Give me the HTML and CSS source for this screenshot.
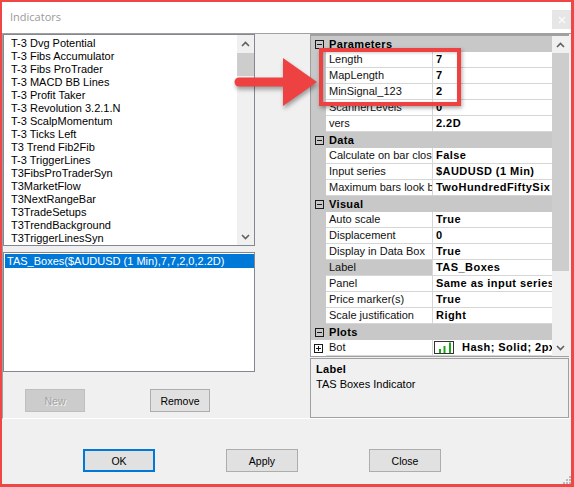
FILE: index.html
```html
<!DOCTYPE html>
<html>
<head>
<meta charset="utf-8">
<link rel="stylesheet" href="styles.css">
</head>
<body>
<div class="window">
  <div class="titlebar">
    <span class="title">Indicators</span>
    <span class="close"><svg width="8" height="8" viewBox="0 0 8 8"><path d="M1 1L7 7M7 1L1 7" stroke="#fbfbfb" stroke-width="1.4"/></svg></span>
  </div>
  <div class="main">
    <div class="leftcol">
      <div class="listbox">
        <ul class="items">
          <li>T-3 Dvg Potential</li>
          <li>T-3 Fibs Accumulator</li>
          <li>T-3 Fibs ProTrader</li>
          <li>T-3 MACD BB Lines</li>
          <li>T-3 Profit Taker</li>
          <li>T-3 Revolution 3.2.1.N</li>
          <li>T-3 ScalpMomentum</li>
          <li>T-3 Ticks Left</li>
          <li>T3 Trend Fib2Fib</li>
          <li>T-3 TriggerLines</li>
          <li>T3FibsProTraderSyn</li>
          <li>T3MarketFlow</li>
          <li>T3NextRangeBar</li>
          <li>T3TradeSetups</li>
          <li>T3TrendBackground</li>
          <li>T3TriggerLinesSyn</li>
        </ul>
        <div class="vscroll">
          <div class="sbtn"><svg width="9" height="6" viewBox="0 0 9 6"><path d="M1 5L4.5 1.5L8 5" fill="none" stroke="#606060" stroke-width="1.6"/></svg></div>
          <div class="track"><div class="thumb list-thumb"></div></div>
          <div class="sbtn"><svg width="9" height="6" viewBox="0 0 9 6"><path d="M1 1L4.5 4.5L8 1" fill="none" stroke="#606060" stroke-width="1.6"/></svg></div>
        </div>
      </div>
      <div class="applied">
        <div class="sel">TAS_Boxes($AUDUSD (1 Min),7,7,2,0,2.2D)</div>
      </div>
      <div class="leftbtns">
        <div class="btn disabled">New</div>
        <div class="btn">Remove</div>
      </div>
    </div>
    <div class="rightcol">
      <div class="grid">
        <div class="rows">
          <div class="cat"><span class="tog"></span>Parameters</div>
          <div class="row"><span class="gut"></span><span class="nm">Length</span><span class="val">7</span></div>
          <div class="row"><span class="gut"></span><span class="nm">MapLength</span><span class="val">7</span></div>
          <div class="row"><span class="gut"></span><span class="nm">MinSignal_123</span><span class="val">2</span></div>
          <div class="row"><span class="gut"></span><span class="nm">ScannerLevels</span><span class="val">0</span></div>
          <div class="row"><span class="gut"></span><span class="nm">vers</span><span class="val">2.2D</span></div>
          <div class="cat"><span class="tog"></span>Data</div>
          <div class="row"><span class="gut"></span><span class="nm">Calculate on bar close</span><span class="val">False</span></div>
          <div class="row"><span class="gut"></span><span class="nm">Input series</span><span class="val">$AUDUSD (1 Min)</span></div>
          <div class="row"><span class="gut"></span><span class="nm">Maximum bars look back</span><span class="val">TwoHundredFiftySix</span></div>
          <div class="cat"><span class="tog"></span>Visual</div>
          <div class="row"><span class="gut"></span><span class="nm">Auto scale</span><span class="val">True</span></div>
          <div class="row"><span class="gut"></span><span class="nm">Displacement</span><span class="val">0</span></div>
          <div class="row"><span class="gut"></span><span class="nm">Display in Data Box</span><span class="val">True</span></div>
          <div class="row"><span class="gut"></span><span class="nm selected">Label</span><span class="val">TAS_Boxes</span></div>
          <div class="row"><span class="gut"></span><span class="nm">Panel</span><span class="val">Same as input series</span></div>
          <div class="row"><span class="gut"></span><span class="nm">Price marker(s)</span><span class="val">True</span></div>
          <div class="row"><span class="gut"></span><span class="nm">Scale justification</span><span class="val">Right</span></div>
          <div class="cat"><span class="tog"></span>Plots</div>
          <div class="row"><span class="gut white"><span class="tog plus"></span></span><span class="nm">Bot</span><span class="val plot"><svg class="ploticon" width="20" height="13" viewBox="0 0 20 13"><rect x="0.5" y="0.5" width="19" height="12" fill="#fff" stroke="#333"/><rect x="5" y="8" width="2" height="4" fill="#19a619"/><rect x="9.5" y="5" width="2" height="7" fill="#19a619"/><rect x="15" y="1.5" width="2" height="10.5" fill="#19a619"/></svg>Hash; Solid; 2px</span></div>
        </div>
        <div class="vscroll">
          <div class="sbtn"><svg width="9" height="6" viewBox="0 0 9 6"><path d="M1 5L4.5 1.5L8 5" fill="none" stroke="#606060" stroke-width="1.6"/></svg></div>
          <div class="track"><div class="thumb grid-thumb"></div></div>
          <div class="sbtn"><svg width="9" height="6" viewBox="0 0 9 6"><path d="M1 1L4.5 4.5L8 1" fill="none" stroke="#606060" stroke-width="1.6"/></svg></div>
        </div>
      </div>
      <div class="desc">
        <div class="desc-title">Label</div>
        <div>TAS Boxes Indicator</div>
      </div>
    </div>
  </div>
  <div class="footer">
    <div class="btn wide default">OK</div>
    <div class="btn wide">Apply</div>
    <div class="btn wide">Close</div>
    <svg class="grip" width="8" height="8" viewBox="0 0 8 8"><rect x="6" y="0" width="2" height="2" fill="#b9b9b9"/><rect x="3" y="3" width="2" height="2" fill="#b9b9b9"/><rect x="6" y="3" width="2" height="2" fill="#b9b9b9"/><rect x="0" y="6" width="2" height="2" fill="#b9b9b9"/><rect x="3" y="6" width="2" height="2" fill="#b9b9b9"/><rect x="6" y="6" width="2" height="2" fill="#b9b9b9"/></svg>
  </div>
  <div class="callout-box"></div>
  <svg class="callout-arrow" width="96" height="58" viewBox="0 0 96 58">
    <line x1="11" y1="30" x2="60" y2="30" stroke="#ee4242" stroke-width="9" stroke-linecap="round"/>
    <polygon points="55,6 89,30 55,54" fill="#ee4242"/>
  </svg>
</div>
</body>
</html>
```

FILE: styles.css
```css
* { box-sizing: border-box; }
html, body { margin: 0; padding: 0; }
body {
  width: 574px;
  height: 487px;
  overflow: hidden;
  font-family: "Liberation Sans", Arial, sans-serif;
  font-size: 11px;
  color: #000;
  background: #fff;
}
.window {
  position: relative;
  width: 574px;
  height: 487px;
  border-style: solid;
  border-color: #ef4646;
  border-width: 2px 3px 3px 2px;
  background: #f0f0f0;
  display: flex;
  flex-direction: column;
}
.titlebar {
  height: 31px;
  flex: none;
  background: #fff;
  display: flex;
  align-items: flex-start;
}
.title {
  font-family: "Open Sans", "Noto Sans", sans-serif;
  font-size: 11px;
  line-height: 15px;
  color: #9a9a9a;
  margin: 7px 0 0 8px;
}
.close {
  margin-left: auto;
  margin-top: 8px;
  width: 19px;
  height: 19px;
  background: #e6e6e6;
  display: flex;
  align-items: center;
  justify-content: center;
}
.main {
  height: 386px;
  flex: none;
  display: flex;
  border-top: 1px solid #a0a0a0;
  border-left: 1px solid #a0a0a0;
  border-bottom: 1px solid #fff;
  padding-right: 2px;
}
.leftcol {
  width: 252px;
  flex: none;
  display: flex;
  flex-direction: column;
}
.listbox {
  height: 212px;
  flex: none;
  border: 1px solid #828790;
  background: #fff;
  display: flex;
}
.items {
  list-style: none;
  margin: 0;
  padding: 2px 0 0 7px;
  flex: 1;
  font-size: 11px;
  line-height: 13px;
  white-space: nowrap;
  overflow: hidden;
}
.vscroll {
  width: 17px;
  flex: none;
  display: flex;
  flex-direction: column;
  background: #f0f0f0;
}
.sbtn {
  height: 17px;
  flex: none;
  display: flex;
  align-items: center;
  justify-content: center;
}
.track { flex: 1; }
.thumb { background: #cdcdcd; }
.list-thumb { margin-top: 1px; height: 23px; }
.grid-thumb { height: 218px; }
.applied {
  height: 120px;
  flex: none;
  margin-top: 6px;
  border: 1px solid #828790;
  background: #fff;
  padding: 1px 0 0 1px;
}
.sel {
  background: #0078d7;
  color: #fff;
  height: 14px;
  line-height: 14px;
  padding-left: 2px;
  white-space: nowrap;
  overflow: hidden;
}
.leftbtns {
  display: flex;
  gap: 65px;
  padding-left: 22px;
  margin-top: 17px;
}
.btn {
  width: 60px;
  height: 23px;
  border: 1px solid #adadad;
  background: #e1e1e1;
  font-size: 10.5px;
  display: flex;
  align-items: center;
  justify-content: center;
}
.btn.disabled {
  background: #cccccc;
  border-color: #bfbfbf;
  color: #a3a3a3;
  text-shadow: 1px 1px 0 #f4f4f4;
}
.btn.wide { width: 72px; }
.btn.default { border: 2px solid #0078d7; }
.rightcol {
  width: 259px;
  flex: none;
  margin-left: 55px;
  display: flex;
  flex-direction: column;
}
.grid {
  height: 323px;
  flex: none;
  display: flex;
  background: #fff;
  border-top: 2px solid #a0a0a0;
  border-left: 1px solid #a0a0a0;
  border-bottom: 1px solid #a0a0a0;
}
.rows {
  width: 241px;
  flex: none;
}
.cat {
  height: 16px;
  display: flex;
  align-items: center;
  background: #c8c8c8;
  font-weight: bold;
  letter-spacing: 0.35px;
}
.tog {
  position: relative;
  width: 9px;
  height: 9px;
  flex: none;
  border: 1px solid #1a1a1a;
  margin: 0 5px 0 4px;
}
.tog::before {
  content: "";
  position: absolute;
  left: 1px;
  top: 3px;
  width: 5px;
  height: 1px;
  background: #1a1a1a;
}
.tog.plus::after {
  content: "";
  position: absolute;
  left: 3px;
  top: 1px;
  width: 1px;
  height: 5px;
  background: #1a1a1a;
}
.row {
  height: 16px;
  display: flex;
}
.gut {
  width: 15px;
  flex: none;
  background: #c8c8c8;
  display: flex;
  align-items: center;
}
.gut.white { background: #fff; }
.gut .tog { margin: 0 0 0 3px; background: #fff; }
.nm, .val {
  border-bottom: 1px solid #d6d6d6;
  line-height: 15px;
  padding-left: 3px;
  white-space: nowrap;
  overflow: hidden;
  text-overflow: clip;
}
.nm {
  width: 107px;
  flex: none;
  border-right: 1px solid #d6d6d6;
  color: #111;
}
.nm.selected { background: #c8c8c8; }
.val {
  width: 119px;
  flex: none;
  font-weight: bold;
  letter-spacing: 0.45px;
}
.val.plot {
  padding-left: 1px;
  display: flex;
  align-items: center;
}
.ploticon { flex: none; margin-right: 8px; }
.desc {
  height: 60px;
  flex: none;
  margin-top: 1px;
  border: 1px solid #a0a0a0;
  background: #f0f0f0;
  padding: 3px 0 0 5px;
  line-height: 15px;
}
.desc-title {
  font-weight: bold;
  letter-spacing: 0.3px;
}
.footer {
  flex: 1;
  display: flex;
  align-items: flex-start;
  gap: 71px;
  padding: 30px 0 0 81px;
}
.grip {
  margin-left: auto;
  align-self: flex-end;
  flex: none;
}
.callout-box {
  position: absolute;
  left: 317px;
  top: 46px;
  width: 142px;
  height: 58px;
  border: 4px solid #ee4242;
  box-shadow: 1px 2px 4px rgba(0, 0, 0, 0.35), inset 1px 1px 3px rgba(0, 0, 0, 0.2);
}
.callout-arrow {
  position: absolute;
  left: 226px;
  top: 50px;
  filter: drop-shadow(1px 3px 2px rgba(0, 0, 0, 0.35));
}
```
